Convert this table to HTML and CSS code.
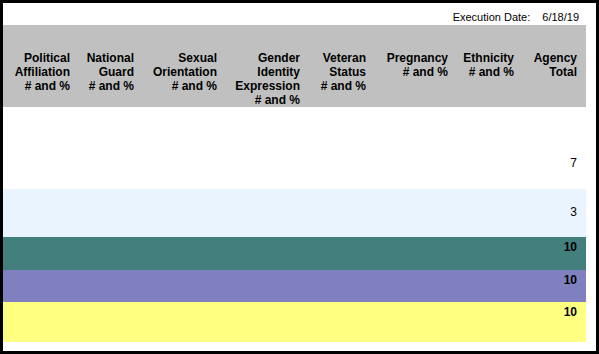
FILE: index.html
```html
<!DOCTYPE html>
<html>
<head>
<meta charset="utf-8">
<link rel="stylesheet" href="styles.css">
</head>
<body>
<div class="frame">
  <div class="topbar">
    <span>Execution Date:</span>
    <span>6/18/19</span>
  </div>
  <table class="report">
    <colgroup>
      <col class="c1"><col class="c2"><col class="c3"><col class="c4">
      <col class="c5"><col class="c6"><col class="c7"><col class="c8">
    </colgroup>
    <thead>
      <tr>
        <th>Political<br>Affiliation<br># and %</th>
        <th>National<br>Guard<br># and %</th>
        <th>Sexual<br>Orientation<br># and %</th>
        <th>Gender<br>Identity<br>Expression<br># and %</th>
        <th>Veteran<br>Status<br># and %</th>
        <th>Pregnancy<br># and %</th>
        <th>Ethnicity<br># and %</th>
        <th class="last">Agency<br>Total</th>
      </tr>
    </thead>
    <tbody>
      <tr class="r-white">
        <td></td><td></td><td></td><td></td><td></td><td></td><td></td><td class="last">7</td>
      </tr>
      <tr class="r-blue">
        <td></td><td></td><td></td><td></td><td></td><td></td><td></td><td class="last">3</td>
      </tr>
      <tr class="r-teal">
        <td></td><td></td><td></td><td></td><td></td><td></td><td></td><td class="last bold">10</td>
      </tr>
      <tr class="r-purple">
        <td></td><td></td><td></td><td></td><td></td><td></td><td></td><td class="last bold">10</td>
      </tr>
      <tr class="r-yellow">
        <td></td><td></td><td></td><td></td><td></td><td></td><td></td><td class="last bold">10</td>
      </tr>
    </tbody>
  </table>
</div>
</body>
</html>
```

FILE: styles.css
```css
html, body {
  margin: 0;
  padding: 0;
  background: #ffffff;
}
body {
  font-family: "Liberation Sans", Arial, sans-serif;
  color: #000;
}
.frame {
  box-sizing: border-box;
  width: 599px;
  height: 354px;
  border: 3px solid #000;
  background: #fff;
}
.topbar {
  box-sizing: border-box;
  height: 22px;
  display: flex;
  justify-content: flex-end;
  gap: 12px;
  padding: 8px 17px 0 0;
  font-size: 11px;
  line-height: 13px;
}
.report {
  border-collapse: collapse;
  border-spacing: 0;
  table-layout: fixed;
  width: 583px;
  font-size: 12px;
  line-height: 14px;
}
.c1 { width: 75px; }
.c2 { width: 64px; }
.c3 { width: 83px; }
.c4 { width: 83px; }
.c5 { width: 66px; }
.c6 { width: 82px; }
.c7 { width: 66px; }
.c8 { width: 64px; }

.report th {
  background: #c0c0c0;
  font-weight: bold;
  text-align: right;
  vertical-align: top;
  height: 56px;
  padding: 26px 8px 0 0;
  box-sizing: content-box;
}
.report th.last { padding-right: 9px; }

.report td {
  padding: 0;
  text-align: right;
  vertical-align: top;
}
.report td.last { padding-right: 9px; }
.report td.bold { font-weight: bold; }

.r-white td { height: 82px; background: #fff; }
.r-white td.last { padding-top: 49px; height: 33px; }

.r-blue td { height: 48px; background: #eaf4fe; }
.r-blue td.last { padding-top: 16px; height: 32px; }

.r-teal td { height: 33px; background: #43807d; }
.r-teal td.last { padding-top: 3px; height: 30px; }

.r-purple td { height: 32px; background: #8080c0; }
.r-purple td.last { padding-top: 3px; height: 29px; }

.r-yellow td { height: 40px; background: #ffff80; }
.r-yellow td.last { padding-top: 3px; height: 37px; }
```
